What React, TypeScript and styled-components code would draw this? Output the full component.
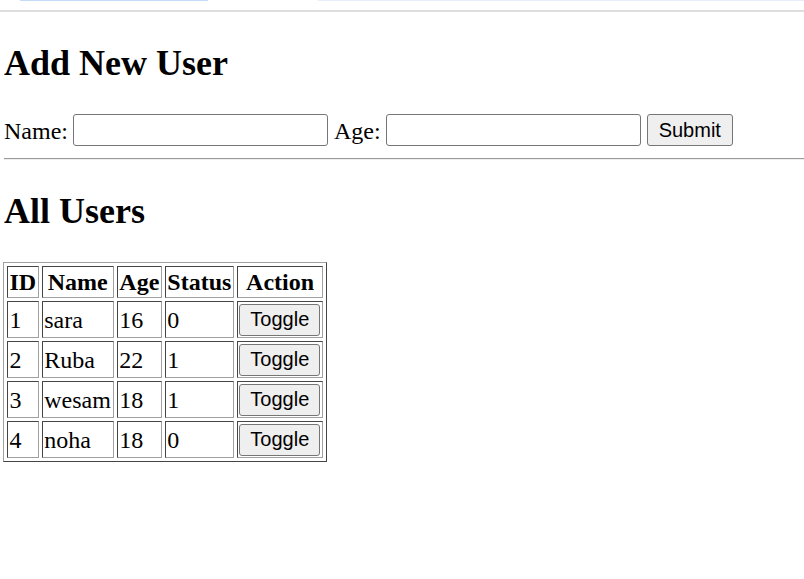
import React, { useState } from "react";
import styled, { createGlobalStyle } from "styled-components";

interface User {
  id: number;
  name: string;
  age: number;
  status: number;
}

const initialUsers: User[] = [
  { id: 1, name: "sara", age: 16, status: 0 },
  { id: 2, name: "Ruba", age: 22, status: 1 },
  { id: 3, name: "wesam", age: 18, status: 1 },
  { id: 4, name: "noha", age: 18, status: 0 },
];

export default function App() {
  const [users, setUsers] = useState<User[]>(initialUsers);
  const [name, setName] = useState("");
  const [age, setAge] = useState("");

  const toggle = (id: number) =>
    setUsers((list) =>
      list.map((u) => (u.id === id ? { ...u, status: u.status ? 0 : 1 } : u))
    );

  const submit = (e: React.FormEvent) => {
    e.preventDefault();
    if (!name || !age) return;
    setUsers((list) => [
      ...list,
      { id: list.length + 1, name, age: Number(age), status: 0 },
    ]);
    setName("");
    setAge("");
  };

  return (
    <>
      <GlobalStyle />
      <TopStrip>
        <Tab $width={188} $offset={20} $color="#c6dbfa" />
        <Tab $width={486} $offset={110} $color="#e6eefb" />
      </TopStrip>
      <Page>
        <Title>Add New User</Title>
        <Form onSubmit={submit}>
          <Label>Name:</Label>
          <TextInput value={name} onChange={(e) => setName(e.target.value)} />
          <Label>Age:</Label>
          <TextInput value={age} onChange={(e) => setAge(e.target.value)} />
          <Button type="submit" $pad={11}>
            Submit
          </Button>
        </Form>
        <Rule />
        <Title>All Users</Title>
        <Table>
          <thead>
            <tr>
              <Th>ID</Th>
              <Th>Name</Th>
              <Th>Age</Th>
              <Th>Status</Th>
              <Th>Action</Th>
            </tr>
          </thead>
          <tbody>
            {users.map((u) => (
              <tr key={u.id}>
                <Td>{u.id}</Td>
                <Td>{u.name}</Td>
                <Td>{u.age}</Td>
                <Td>{u.status}</Td>
                <Td>
                  <Button type="button" $pad={10} onClick={() => toggle(u.id)}>
                    Toggle
                  </Button>
                </Td>
              </tr>
            ))}
          </tbody>
        </Table>
      </Page>
    </>
  );
}

const GlobalStyle = createGlobalStyle`
  body {
    margin: 0;
    background: #fff;
    color: #000;
    font-family: "Liberation Serif", "Times New Roman", serif;
    font-size: 24px;
  }
`;

const TopStrip = styled.div`
  display: flex;
  height: 10px;
  border-bottom: 2px solid #dedede;
`;

const Tab = styled.div<{ $width: number; $offset: number; $color: string }>`
  width: ${({ $width }) => $width}px;
  margin-left: ${({ $offset }) => $offset}px;
  height: 1px;
  background: ${({ $color }) => $color};
`;

const Page = styled.div`
  padding: 0 0 0 4px;
`;

const Title = styled.h2`
  font-size: 36px;
  font-weight: bold;
  margin: 30px 0;
`;

const Form = styled.form`
  display: flex;
  align-items: center;
  gap: 5px;
  height: 32px;
  margin: 0;
`;

const Label = styled.span`
  font-size: 24px;
  line-height: 28px;
  padding-top: 2px;
`;

const TextInput = styled.input`
  box-sizing: border-box;
  width: 255px;
  height: 32px;
  margin-right: 1px;
  padding: 1px 3px;
  border: 1px solid #767676;
  border-radius: 3px;
  font-family: Arial, "Liberation Sans", sans-serif;
  font-size: 20px;
`;

const Button = styled.button<{ $pad: number }>`
  box-sizing: border-box;
  display: block;
  height: 32px;
  padding: 0 ${({ $pad }) => $pad}px;
  background: #efefef;
  border: 1px solid #767676;
  border-radius: 3px;
  color: #000;
  font-family: Arial, "Liberation Sans", sans-serif;
  font-size: 20px;
  cursor: pointer;
`;

const Rule = styled.hr`
  margin: 12px -8px 0 0;
  border: none;
  border-top: 1px solid #9a9a9a;
  border-bottom: 1px solid #eeeeee;
`;

const Table = styled.table`
  margin-left: -1px;
  border: 1px solid;
  border-color: #a0a0a0 #444 #444 #a0a0a0;
  border-spacing: 3px;
`;

const Th = styled.th`
  padding: 1px 1.5px;
  border: 1px solid;
  border-color: #444 #a0a0a0 #a0a0a0 #444;
  font-size: 24px;
  font-weight: bold;
  text-align: center;
  line-height: 28px;
`;

const Td = styled.td`
  padding: 1.5px 2px 1.5px 1.5px;
  border: 1px solid;
  border-color: #444 #a0a0a0 #a0a0a0 #444;
  font-size: 24px;
  line-height: 28px;
  vertical-align: middle;
`;
